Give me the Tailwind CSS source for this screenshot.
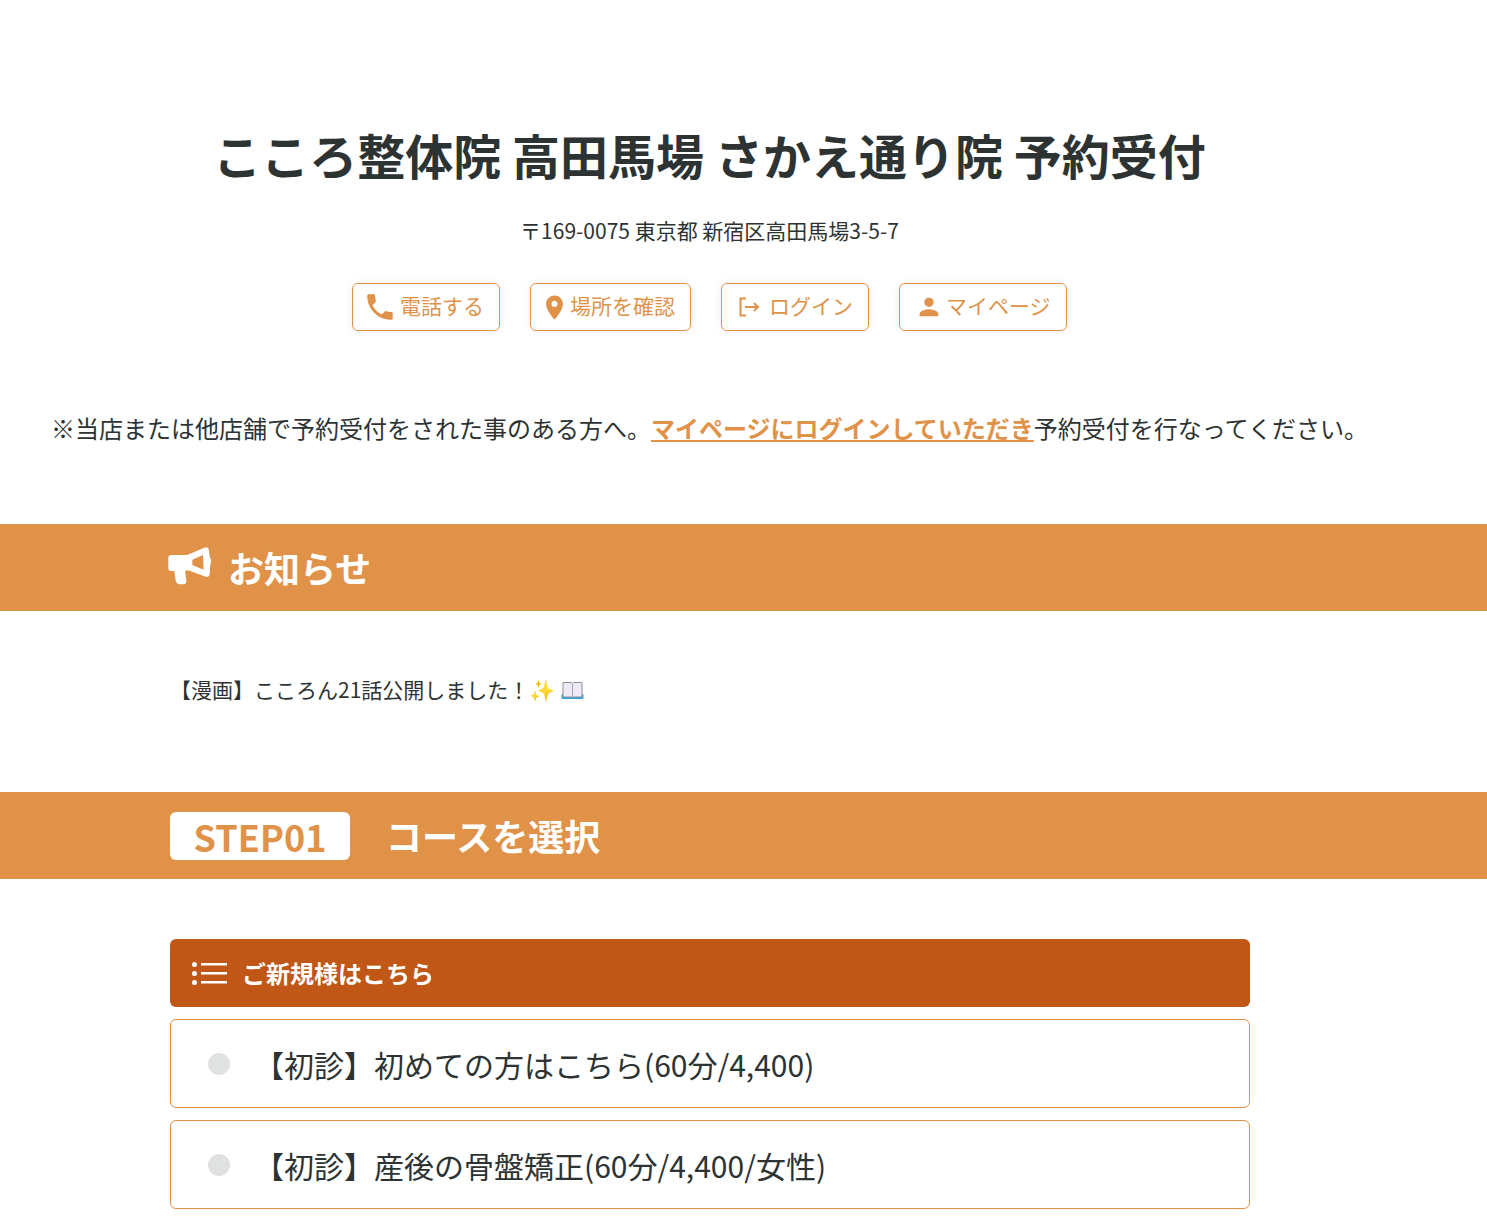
<!DOCTYPE html>
<html lang="ja">
<head>
<meta charset="UTF-8">
<title>こころ整体院 高田馬場 さかえ通り院 予約受付</title>
<script src="https://cdn.jsdelivr.net/npm/@tailwindcss/browser@4"></script>
</head>
<body class="bg-white text-[#2d3333] font-['Noto_Sans_CJK_JP','Noto_Sans',sans-serif] overflow-hidden h-[1225px]">
  <header class="w-[1419px] pt-[119px] text-center">
    <h1 class="text-[48px] leading-[70px] font-semibold">こころ整体院 高田馬場 さかえ通り院 予約受付</h1>
    <p class="mt-[26px] text-[21px] leading-[30px]">〒169-0075 東京都 新宿区高田馬場3-5-7</p>
    <div class="mt-[38px] flex justify-center gap-[30px] text-[21px] text-[#e09249]">
      <a class="h-[48px] w-[148px] pl-[10px] flex items-center gap-[3px] border border-[#e09249] rounded-md shadow-[0_0_10px_rgba(0,0,0,0.07)]">
        <svg class="w-[34px] h-[34px]" viewBox="0 0 24 24" fill="#e09249"><path d="M6.620 10.790c1.440 2.830 3.760 5.140 6.590 6.590l2.200-2.200c.27-.27.67-.36 1.020-.24 1.120.37 2.330.57 3.570.57.55 0 1 .45 1 1V20c0 .55-.45 1-1 1-9.390 0-17-7.610-17-17 0-.55.45-1 1-1h3.500c.55 0 1 .45 1 1 0 1.250.2 2.450.57 3.570.11.35.03.74-.25 1.020l-2.200 2.200z"/></svg>
        <span class="-mt-[2px]">電話する</span>
      </a>
      <a class="h-[48px] w-[161px] pl-[9px] flex items-center gap-[1px] border border-[#e09249] rounded-md shadow-[0_0_10px_rgba(0,0,0,0.07)]">
        <svg class="w-[29px] h-[29px]" viewBox="0 0 24 24" fill="#e09249"><path d="M12 2C8.130 2 5 5.130 5 9c0 5.250 7 13 7 13s7-7.750 7-13c0-3.870-3.130-7-7-7zm0 9.500c-1.380 0-2.500-1.120-2.500-2.500s1.120-2.500 2.500-2.500 2.500 1.120 2.500 2.500-1.120 2.500-2.500 2.500z"/></svg>
        <span class="-mt-[2px]">場所を確認</span>
      </a>
      <a class="h-[48px] w-[148px] pl-[16px] flex items-center gap-[9px] border border-[#e09249] rounded-md shadow-[0_0_10px_rgba(0,0,0,0.07)]">
        <svg class="w-[22px] h-[22px]" viewBox="0 0 22 22" fill="none" stroke="#e09249" stroke-width="2"><path d="M8 2.500H2.500v17H8M7 11h13M16 7l4 4-4 4"/></svg>
        <span class="-mt-[2px]">ログイン</span>
      </a>
      <a class="h-[48px] w-[168px] pl-[15px] flex items-center gap-[3px] border border-[#e09249] rounded-md shadow-[0_0_10px_rgba(0,0,0,0.07)]">
        <svg class="w-[28px] h-[28px]" viewBox="0 0 24 24" fill="#e09249"><path d="M12 12c2.210 0 4-1.790 4-4s-1.790-4-4-4-4 1.790-4 4 1.790 4 4 4zm0 2c-2.670 0-8 1.340-8 4v2h16v-2c0-2.660-5.330-4-8-4z"/></svg>
        <span class="-mt-[2px]">マイページ</span>
      </a>
    </div>
  </header>

  <p class="mt-[79px] pl-[51px] text-[24px] leading-[36px] whitespace-nowrap">※当店または他店舗で予約受付をされた事のある方へ。<a class="text-[#e09249] font-semibold underline">マイページにログインしていただき</a>予約受付を行なってください。</p>

  <section class="mt-[78px] h-[87px] bg-[#e09249] pl-[165px] flex items-center gap-[13px] text-white">
    <svg class="w-[50px] h-[45px]" viewBox="0 0 150 135" fill="#fff"><path fill-rule="evenodd" d="M18 30 66 30 118 8Q130 4 132 16L134 36Q142 46 136 58L134 86Q132 100 118 94L70 76 60 78 64 106Q66 118 54 118L44 118Q34 118 32 106L28 78 18 78Q10 78 10 68L10 40Q10 30 18 30ZM82 44 114 30 116 74 82 60Z"/></svg>
    <h2 class="text-[36px] leading-[54px] font-bold -mt-[2px]">お知らせ</h2>
  </section>

  <p class="mt-[63px] pl-[170px] text-[21px] leading-[30px] flex items-center h-[30px]">
    <span>【漫画】こころん21話公開しました！✨</span>
    <svg class="w-[23px] h-[19px] ml-[6px] mt-[3px]" viewBox="0 0 23 19"><rect x="0.500" y="13" width="22" height="5" rx="1" fill="#2fa5dd"/><path d="M2 1.500h8.500l1 1 1-1H21v14.500H12.500l-1 .7-1-.7H2Z" fill="#efe9f5" stroke="#8d8f9b" stroke-width="1"/><path d="M11.500 2.500v14" stroke="#a5a6b1" stroke-width="1"/></svg>
  </p>

  <section class="mt-[88px] h-[87px] bg-[#e09249] pl-[170px] flex items-center gap-[36px]">
    <span class="w-[180px] h-[48px] bg-white rounded-md text-center text-[36px] leading-[48px] font-semibold text-[#e09249]">STEP01</span>
    <h2 class="text-[36px] leading-[54px] font-bold text-white -mt-[2px]">コースを選択</h2>
  </section>

  <main class="mt-[60px] ml-[170px] w-[1080px]">
    <div class="h-[68px] rounded-md bg-[#c05717] flex items-center gap-[14px] pl-[22px] text-white">
      <svg class="w-[36px] h-[24px]" viewBox="0 0 36 24" fill="#fff"><circle cx="2.500" cy="3.500" r="2.500"/><circle cx="2.500" cy="12.500" r="2.500"/><circle cx="2.500" cy="21.500" r="2.500"/><rect x="9" y="2" width="26" height="2.500"/><rect x="9" y="11" width="26" height="2.500"/><rect x="9" y="20" width="26" height="2.500"/></svg>
      <span class="text-[24px] leading-[36px] font-bold">ご新規様はこちら</span>
    </div>
    <label class="mt-[12px] h-[89px] flex items-center border border-[#e09249] rounded-md pl-[37px]">
      <span class="w-[22px] h-[22px] rounded-full bg-[#e0e2e2]"></span>
      <span class="ml-[24px] text-[30px] leading-[45px] mt-[2px]">【初診】初めての方はこちら(60分/4,400)</span>
    </label>
    <label class="mt-[12px] h-[89px] flex items-center border border-[#e09249] rounded-md pl-[37px]">
      <span class="w-[22px] h-[22px] rounded-full bg-[#e0e2e2]"></span>
      <span class="ml-[24px] text-[30px] leading-[45px] mt-[2px]">【初診】産後の骨盤矯正(60分/4,400/女性)</span>
    </label>
  </main>
</body>
</html>
